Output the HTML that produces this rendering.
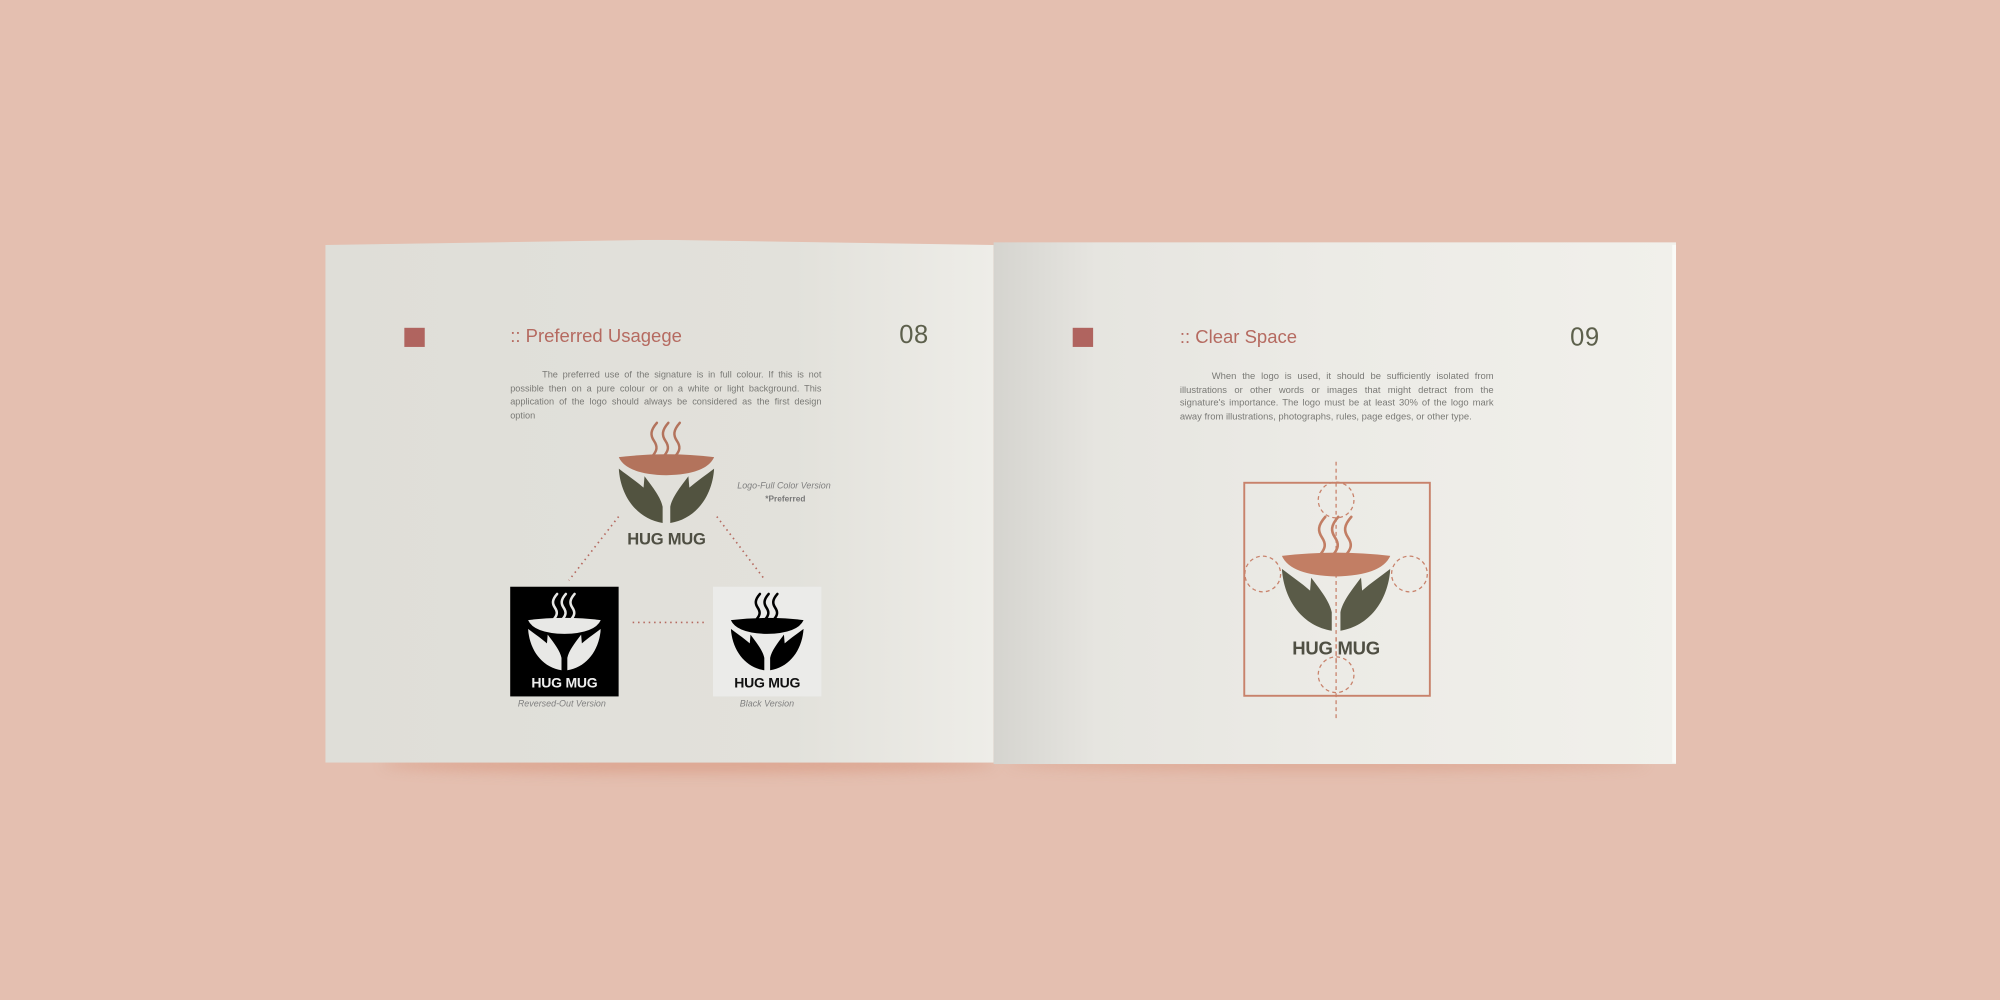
<!DOCTYPE html>
<html><head><meta charset="utf-8"><style>
html,body{margin:0;padding:0;width:2000px;height:1000px;overflow:hidden;background:#e4bfb0}
#s{position:absolute;left:0;top:0;width:1568px;height:784px;transform:scale(1.27551);transform-origin:0 0;font-family:"Liberation Sans",sans-serif}
.pg{position:absolute}
.abs{position:absolute}
.sq{position:absolute;width:16px;height:15px;background:#b0645f}
.title{position:absolute;font-size:14.5px;color:#b56a60;white-space:nowrap}
.num{position:absolute;font-size:20px;color:#5d604c;letter-spacing:.5px}
.para{position:absolute;font-size:7.2px;line-height:10.5px;color:#7a7a76;text-align:justify;text-indent:25px}
.hm{position:absolute;font-weight:bold;color:#4f4f43;white-space:nowrap;text-align:center;letter-spacing:-.2px}
.cap{position:absolute;font-size:7px;font-style:italic;color:#808080;white-space:nowrap}
</style></head><body><div id="s">
<svg width="0" height="0" style="position:absolute"><defs>
<g id="leaf"><path d="M0,50 C2,80 20,103 46,107 L46,90 C44,80 36,70 27,58 L26,70 C18,63 9,57 0,50 Z"/></g>
<g id="steam"><path d="M40,2 C33,10 33,15 37,21 C41,27 40,31 36,36"/><path d="M52,2 C45,10 45,15 49,21 C53,27 52,31 48,36"/><path d="M64,2 C57,10 57,15 61,21 C65,27 64,31 60,36"/></g>
</defs></svg>
<div class="abs" style="left:300px;top:592px;width:480px;height:14px;border-radius:50%;background:#d99c85;filter:blur(5px);opacity:.7"></div>
<div class="abs" style="left:790px;top:592px;width:500px;height:12px;border-radius:50%;background:#d99c85;filter:blur(5px);opacity:.6"></div>
<div class="pg" style="left:255px;top:188px;width:524px;height:410px;background:linear-gradient(90deg,#dfded8 0%,#e2e1db 70%,#eeede8 100%);clip-path:polygon(0 1%,50% 0,100% 1%,100% 100%,0 100%)"></div>
<div class="pg" style="left:779px;top:190px;width:535px;height:409px;background:linear-gradient(90deg,#d5d4cf 0%,#e6e5e0 15%,#ecebe6 50%,#f1f0eb 100%)"></div>
<div class="abs" style="left:1311px;top:192px;width:3px;height:406px;background:#fafaf7"></div>

<div class="sq" style="left:317px;top:257px"></div>
<div class="title" style="left:400px;top:256px">:: Preferred Usagege</div>
<div class="num" style="left:705px;top:252px">08</div>
<div class="para" style="left:400px;top:289px;width:244px">The preferred use of the signature is in full colour. If this is not possible then on a pure colour or on a white or light background. This application of the logo should always be considered as the first design option</div>

<svg class="abs" style="left:485px;top:330px" width="75" height="80" viewBox="0 0 100 107">
<g fill="none" stroke="#b3735c" stroke-width="2.6" stroke-linecap="round"><use href="#steam"/></g>
<path fill="#b3735c" d="M0,38 Q50,32 100,38 Q92,56 50,57 Q8,56 0,38 Z"/>
<g fill="#525340"><use href="#leaf"/><use href="#leaf" transform="translate(100,0) scale(-1,1)"/></g></svg>
<div class="hm" style="left:480px;top:415px;width:85px;font-size:13px">HUG MUG</div>
<div class="cap" style="left:578px;top:378px">Logo-Full Color Version</div>
<div class="abs" style="left:600px;top:388px;font-size:6.5px;font-weight:bold;color:#777">*Preferred</div>

<svg class="abs" style="left:0;top:0" width="1568" height="784">
<g stroke="#b56a60" stroke-width="1.3" stroke-dasharray="1.2 3" fill="none">
<line x1="485" y1="405" x2="446" y2="455"/><line x1="562" y1="405" x2="600" y2="455"/><line x1="496" y1="488" x2="552" y2="488"/>
</g>
<rect x="975.5" y="378.5" width="145.5" height="167" fill="none" stroke="#c8826b" stroke-width="1.5"/>
<g fill="none" stroke="#c8826b" stroke-width="1" stroke-dasharray="3 2.5">
<line x1="1047.5" y1="362" x2="1047.5" y2="563"/>
<circle cx="1047.5" cy="392" r="14"/><circle cx="990" cy="450" r="14"/><circle cx="1105" cy="450" r="14"/><circle cx="1047.5" cy="529" r="14"/>
</g></svg>

<div class="abs" style="left:400px;top:460px;width:85px;height:86px;background:#000"></div>
<svg class="abs" style="left:414px;top:464px" width="57" height="62" viewBox="0 0 100 107">
<g fill="none" stroke="#e8e8e6" stroke-width="3.5" stroke-linecap="round"><use href="#steam"/></g>
<path fill="#e8e8e6" d="M0,38 Q50,32 100,38 Q92,56 50,57 Q8,56 0,38 Z"/>
<g fill="#e8e8e6"><use href="#leaf"/><use href="#leaf" transform="translate(100,0) scale(-1,1)"/></g></svg>
<div class="hm" style="left:400px;top:530px;width:85px;font-size:11px;color:#eee">HUG MUG</div>
<div class="cap" style="left:406px;top:549px">Reversed-Out Version</div>

<div class="abs" style="left:559px;top:460px;width:85px;height:86px;background:#ebebe9"></div>
<svg class="abs" style="left:573px;top:464px" width="57" height="62" viewBox="0 0 100 107">
<g fill="none" stroke="#000" stroke-width="3.5" stroke-linecap="round"><use href="#steam"/></g>
<path fill="#000" d="M0,38 Q50,32 100,38 Q92,56 50,57 Q8,56 0,38 Z"/>
<g fill="#000"><use href="#leaf"/><use href="#leaf" transform="translate(100,0) scale(-1,1)"/></g></svg>
<div class="hm" style="left:559px;top:530px;width:85px;font-size:11px;color:#111">HUG MUG</div>
<div class="cap" style="left:580px;top:549px">Black Version</div>

<div class="sq" style="left:841px;top:257px"></div>
<div class="title" style="left:925px;top:257px">:: Clear Space</div>
<div class="num" style="left:1231px;top:254px">09</div>
<div class="para" style="left:925px;top:290px;width:246px;font-size:7.4px">When the logo is used, it should be sufficiently isolated from illustrations or other words or images that might detract from the signature's importance. The logo must be at least 30% of the logo mark away from illustrations, photographs, rules, page edges, or other type.</div>

<svg class="abs" style="left:1005px;top:403px" width="85" height="92" viewBox="0 0 100 107">
<g fill="none" stroke="#c27e64" stroke-width="2.4" stroke-linecap="round"><use href="#steam"/></g>
<path fill="#c27e64" d="M0,38 Q50,32 100,38 Q92,56 50,57 Q8,56 0,38 Z"/>
<g fill="#5a5b48"><use href="#leaf"/><use href="#leaf" transform="translate(100,0) scale(-1,1)"/></g></svg>
<div class="hm" style="left:1000px;top:501px;width:95px;font-size:14.5px">HUG MUG</div>
<div class="abs" style="left:1047px;top:500px;width:1px;height:20px;border-left:1px dashed #c8826b"></div>
</div></body></html>
